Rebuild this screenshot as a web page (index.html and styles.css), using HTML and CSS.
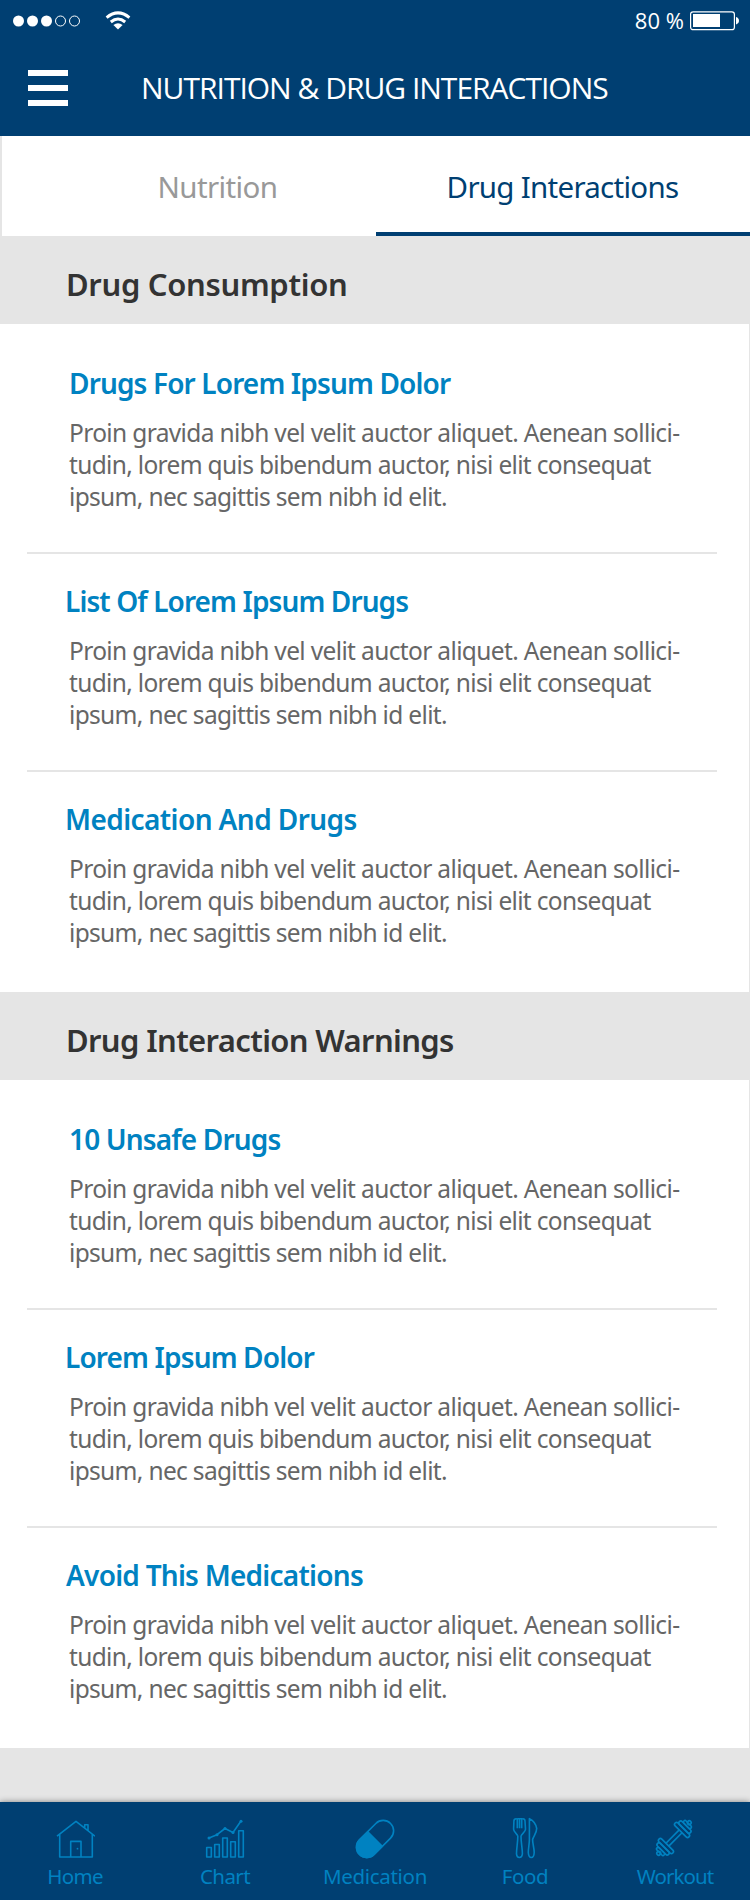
FILE: index.html
```
<!DOCTYPE html>
<html lang="en">
<head>
<meta charset="utf-8">
<title>Nutrition &amp; Drug Interactions</title>
<link rel="stylesheet" href="styles.css">
</head>
<body>
<div class="app">
  <header class="top">
    <div class="status">
      <svg class="signal" width="68" height="12" viewBox="0 0 68 12">
        <g fill="#fff"><circle cx="5.5" cy="6" r="5.5"/><circle cx="19.5" cy="6" r="5.5"/><circle cx="33.5" cy="6" r="5.5"/></g>
        <g fill="none" stroke="#fff"><circle cx="47.5" cy="6" r="5"/><circle cx="61.5" cy="6" r="5"/></g>
      </svg>
      <svg class="wifi" width="26" height="19" viewBox="0 0 26 19">
        <g fill="none" stroke="#fff" stroke-width="3"><path d="M1.6 6.6Q13-2.8 24.4 6.6"/><path d="M5.8 11Q13 5 20.2 11"/></g>
        <path d="M8.4 14Q13 10.400 17.600 14L13 18.500Z" fill="#fff"/>
      </svg>
      <span class="percent">80 %</span>
      <svg class="battery" width="49" height="20" viewBox="0 0 49 20">
        <rect x=".6" y=".9" width="43.8" height="17.800" rx="2.500" fill="none" stroke="#fff" stroke-width="1.200"/>
        <rect x="3" y="3" width="27" height="13" fill="#fff"/>
        <path d="M46 6Q49 7 49 9.700T46 13.400Z" fill="#fff"/>
      </svg>
    </div>
    <div class="titlebar">
      <div class="menu"><i></i><i></i><i></i></div>
      <h1>NUTRITION &amp; DRUG INTERACTIONS</h1>
    </div>
  </header>

  <nav class="tabs">
    <a class="tab">Nutrition</a>
    <a class="tab active">Drug Interactions</a>
  </nav>

  <h2 class="band consumption">Drug Consumption</h2>
  <section class="list">
    <article class="item">
      <h3 class="drugs-for">Drugs For Lorem Ipsum Dolor</h3>
      <p>Proin gravida nibh vel velit auctor aliquet. Aenean sollici-<br>tudin, lorem quis bibendum auctor, nisi elit consequat<br>ipsum, nec sagittis sem nibh id elit.</p>
    </article>
    <article class="item">
      <h3 class="list-of">List Of Lorem Ipsum Drugs</h3>
      <p>Proin gravida nibh vel velit auctor aliquet. Aenean sollici-<br>tudin, lorem quis bibendum auctor, nisi elit consequat<br>ipsum, nec sagittis sem nibh id elit.</p>
    </article>
    <article class="item">
      <h3 class="medication">Medication And Drugs</h3>
      <p>Proin gravida nibh vel velit auctor aliquet. Aenean sollici-<br>tudin, lorem quis bibendum auctor, nisi elit consequat<br>ipsum, nec sagittis sem nibh id elit.</p>
    </article>
  </section>

  <h2 class="band warnings">Drug Interaction Warnings</h2>
  <section class="list">
    <article class="item">
      <h3 class="unsafe">10 Unsafe Drugs</h3>
      <p>Proin gravida nibh vel velit auctor aliquet. Aenean sollici-<br>tudin, lorem quis bibendum auctor, nisi elit consequat<br>ipsum, nec sagittis sem nibh id elit.</p>
    </article>
    <article class="item">
      <h3 class="lorem">Lorem Ipsum Dolor</h3>
      <p>Proin gravida nibh vel velit auctor aliquet. Aenean sollici-<br>tudin, lorem quis bibendum auctor, nisi elit consequat<br>ipsum, nec sagittis sem nibh id elit.</p>
    </article>
    <article class="item">
      <h3 class="avoid">Avoid This Medications</h3>
      <p>Proin gravida nibh vel velit auctor aliquet. Aenean sollici-<br>tudin, lorem quis bibendum auctor, nisi elit consequat<br>ipsum, nec sagittis sem nibh id elit.</p>
    </article>
  </section>

  <footer class="dock">
    <a class="dock-item home">
      <svg viewBox="0 0 40 42"><path d="M2 19.200 21 4.300 40 19.200M29.700 11V7.800H33V13.700M4.700 17.500V40H37.300V17.500M15.700 40V24.400H26V40"/><circle cx="22.500" cy="31.700" r=".9" class="solid"/></svg>
      <span>Home</span>
    </a>
    <a class="dock-item chart">
      <svg viewBox="0 0 40 42"><path d="M1.700 30.500h4.600V40H1.700zM9.700 27.500h4.600V40H9.700zM17.700 21h4.600v19h-4.600zM25.700 24.800h4.600V40h-4.600zM33.700 13.700h4.600V40h-4.600zM4 21l8-3.300 8-6.200 8 4 8-11.500"/><g class="solid"><circle cx="4" cy="21" r="1.500"/><circle cx="12" cy="17.700" r="1.500"/><circle cx="20" cy="11.500" r="1.500"/><circle cx="28" cy="15.500" r="1.500"/><circle cx="36" cy="4.200" r="1.500"/></g></svg>
      <span>Chart</span>
    </a>
    <a class="dock-item pills">
      <svg viewBox="0 0 40 42"><g transform="translate(20 22) rotate(-45)"><rect x="-22" y="-10.400" width="44" height="20.800" rx="10.400"/><path class="solid" d="M.8-11H-11.500A11 11 0 0 0-11.500 11H.8Z"/></g></svg>
      <span>Medication</span>
    </a>
    <a class="dock-item food">
      <svg viewBox="0 0 40 42"><path d="M12.300 11.200V2.600Q12.300 1.700 11.200 1.700Q8.900 1.700 8.900 4L8.600 12.300C8.600 15.500 12.800 17 12.800 19.300C12.800 26 11.500 31 11.500 37Q11.800 40.500 14.400 40.500T17.400 37C17.400 31 16 26 16 19.300C16 17 20.500 15.500 20.500 12.300L20 4Q20 1.700 17.800 1.700Q16.700 1.700 16.700 2.600V11.200M12.300 1.700H17M14.500 2V11.200M24.400 2V22.500C24.400 27 23.300 31 23.300 35.500Q23.600 40.500 26.300 40.500T29.200 35.500C29.200 31 27.600 27 27.600 22.500C28.500 19 31.700 16 31.700 11.500Q30.500 4.500 24.400 1.700Z"/></svg>
      <span>Food</span>
    </a>
    <a class="dock-item workout">
      <svg viewBox="0 0 40 42"><g transform="translate(19 21) rotate(-45)"><path d="M-9.400-2H9.400M-9.400 2H9.400"/><g><rect x="9.400" y="-9.800" width="4" height="19.600" rx="2"/><rect x="13.400" y="-7.800" width="4" height="15.600" rx="2"/><rect x="17.400" y="-5" width="3.200" height="10" rx="1.600"/><circle cx="21.600" cy="0" r="1.900"/></g><g transform="scale(-1 1)"><rect x="9.400" y="-9.800" width="4" height="19.600" rx="2"/><rect x="13.400" y="-7.800" width="4" height="15.600" rx="2"/><rect x="17.400" y="-5" width="3.200" height="10" rx="1.600"/><circle cx="21.600" cy="0" r="1.900"/></g></g></svg>
      <span>Workout</span>
    </a>
  </footer>
</div>
</body>
</html>
```
FILE: styles.css
```
* { box-sizing: border-box; margin: 0; padding: 0; }

body { background: #e5e5e5; font-family: "Noto Sans", "Open Sans", sans-serif; }

.app { display: flex; flex-direction: column; width: 750px; height: 1900px; background: #e5e5e5; overflow: hidden; }

/* Status and title bars */
.top { height: 136px; background: #003f72; color: #fff; }
.status { display: flex; align-items: center; height: 41px; padding: 0 11px 0 13px; }
.wifi { margin-left: 24px; margin-top: -1px; }
.percent { margin-left: auto; margin-right: 6px; font-family: "Open Sans", sans-serif; font-size: 22px; line-height: 41px; letter-spacing: 0.04px; }
.titlebar { display: flex; align-items: center; height: 93px; padding-left: 28px; }
.menu { display: flex; flex-direction: column; gap: 9px; width: 40px; margin-top: 1px; }
.menu i { height: 6px; background: #fff; }
h1 { margin-left: 73px; font: 400 30px/40px "Open Sans", sans-serif; letter-spacing: -1px; white-space: nowrap; }

/* Tabs */
.tabs { display: flex; height: 100px; background: #fff; border-left: 2px solid #e5e5e5; }
.tab { width: 374px; padding-left: 57px; text-align: center; font-size: 29.5px; line-height: 101px; letter-spacing: -0.62px; color: #999; }
.tab.active { padding: 0 1px 0 0; letter-spacing: -0.72px; color: #003f72; border-bottom: 4px solid #003f72; }

/* Section headings */
.band { height: 88px; padding: 8px 0 0 66px; font-size: 31px; font-weight: 600; line-height: 80px; color: #333; }
.consumption { letter-spacing: -0.32px; }
.warnings { letter-spacing: -0.64px; }

/* Articles */
.list { height: 668px; padding-top: 12px; background: #fff; border-right: 1px solid #e5e5e5; }
.item { height: 218px; margin: 0 32px 0 27px; padding: 27px 0 0 42px; border-bottom: 2px solid #e5e5e5; }
.item:last-child { border-bottom: 0; }
.item h3 { margin-left: -4px; font-size: 28px; font-weight: 600; line-height: 40px; color: #0082c1; }
.item .drugs-for { margin-left: 0; letter-spacing: -0.86px; }
.list-of { letter-spacing: -0.9px; }
.medication { letter-spacing: -0.58px; }
.item .unsafe { margin-left: 0; letter-spacing: -0.85px; }
.lorem { letter-spacing: -0.86px; }
.item .avoid { margin-left: -3px; letter-spacing: -0.75px; }
.item p { margin-top: 14px; font-size: 24.5px; line-height: 32px; letter-spacing: -0.67px; color: #666; white-space: nowrap; }
.item p::first-line { letter-spacing: -0.64px; }

/* Bottom navigation */
.dock { display: grid; grid-template-columns: repeat(5, 150px); height: 98px; margin-top: auto; padding-top: 15px; background: #003f72; box-shadow: 0 0 6px rgba(0, 0, 0, 0.45); }
.dock-item { display: flex; flex-direction: column; align-items: center; color: #0082c1; font-size: 20.5px; line-height: 30px; }
.dock-item svg { width: 40px; height: 42px; margin-bottom: 2px; fill: none; stroke: #0082c1; stroke-width: 1.6; stroke-linejoin: round; }
.dock-item .solid { fill: #0082c1; stroke: none; }
.home { letter-spacing: -0.67px; }
.chart { letter-spacing: -0.6px; }
.pills { letter-spacing: -0.31px; }
.food { letter-spacing: -0.4px; }
.workout { letter-spacing: -0.9px; }
```
